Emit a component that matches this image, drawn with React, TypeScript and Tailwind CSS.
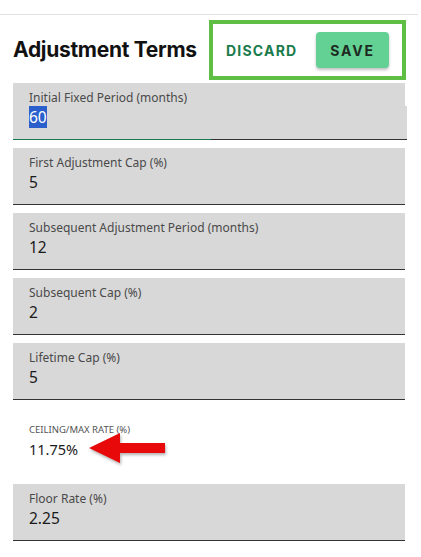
import React from "react";

const fieldFont = { fontFamily: '"Noto Sans", "Open Sans", sans-serif' };

function Field({
  label,
  value,
  first,
}: {
  label: string;
  value: string;
  first?: boolean;
}) {
  return (
    <div className="flex flex-col w-[394px]">
      <div className="w-[392px] bg-[#d8d8d8] pl-[16px] pt-[7px]">
        <div className="text-[12px] leading-[16px] text-[#4a4a4a]" style={fieldFont}>
          {label}
        </div>
      </div>
      <div className={`${first ? "w-[394px]" : "w-[392px]"} bg-[#d8d8d8] pl-[16px] pb-[11px]`}>
        <div className="text-[15.5px] leading-[22px] text-[#1a1a1a]" style={fieldFont}>
          {first ? (
            <span className="bg-[#2a5fcc] text-white">{value}</span>
          ) : (
            value
          )}
        </div>
      </div>
      {first ? (
        <div className="flex h-[1px] w-[394px]">
          <div className="w-[198px] bg-[#1b7a4c]" />
          <div className="flex-1 bg-[#333333]" />
        </div>
      ) : (
        <div className="h-[1px] w-[392px] bg-[#333333]" />
      )}
    </div>
  );
}

export default function App() {
  return (
    <div className="w-[421px] h-[557px] bg-white overflow-hidden">
      <div className="pt-[14px]">
        <div className="h-[1px] w-[418px] bg-[#e2e2e2]" />
      </div>
      <div className="flex items-center justify-between w-[393px] ml-[13px] pt-[5px] pb-[3px]">
        <div
          className="text-[21px] font-bold text-[#111] tracking-[-0.3px]"
          style={{ fontFamily: '"Inter", "Open Sans", sans-serif' }}
        >
          Adjustment Terms
        </div>
        <div className="w-[197px] h-[60px] border-[4px] border-[#5fbf45] flex items-center justify-between pl-[13px] pr-[13px]">
          <span
            className="text-[14px] font-bold tracking-[1.2px] text-[#1a7b4c]"
            style={{ fontFamily: '"Inter", "Roboto", sans-serif' }}
          >
            DISCARD
          </span>
          <div
            className="w-[73px] h-[36px] rounded-[4px] bg-[#63d194] flex items-center justify-center shadow-[0_2px_3px_rgba(0,0,0,0.25)] text-[14px] font-bold tracking-[1.8px] text-[#1d2a22]"
            style={{ fontFamily: '"Inter", "Roboto", sans-serif' }}
          >
            SAVE
          </div>
        </div>
      </div>
      <div className="ml-[13px] flex flex-col gap-[8px]">
        <Field label="Initial Fixed Period (months)" value="60" first />
        <Field label="First Adjustment Cap (%)" value="5" />
        <Field label="Subsequent Adjustment Period (months)" value="12" />
        <Field label="Subsequent Cap (%)" value="2" />
        <Field label="Lifetime Cap (%)" value="5" />
        <div className="pl-[16px] pt-[15px] h-[68px]">
          <div className="text-[9.5px] leading-[13px] text-[#555]" style={fieldFont}>
            CEILING/MAX RATE (%)
          </div>
          <div className="flex items-center mt-[3px] h-[20px]">
            <span className="text-[14.5px] leading-[20px] text-[#1a1a1a]" style={fieldFont}>
              11.75%
            </span>
            <svg
              width="80"
              height="34"
              viewBox="0 0 80 34"
              className="ml-[10px] shrink-0"
              style={{ filter: "drop-shadow(1px 2px 1.5px rgba(0,0,0,0.3))" }}
            >
              <polygon
                points="1,16 32,1 32,11 77,11 77,21 32,21 32,31"
                fill="#e80a0a"
              />
            </svg>
          </div>
        </div>
        <Field label="Floor Rate (%)" value="2.25" />
      </div>
    </div>
  );
}
